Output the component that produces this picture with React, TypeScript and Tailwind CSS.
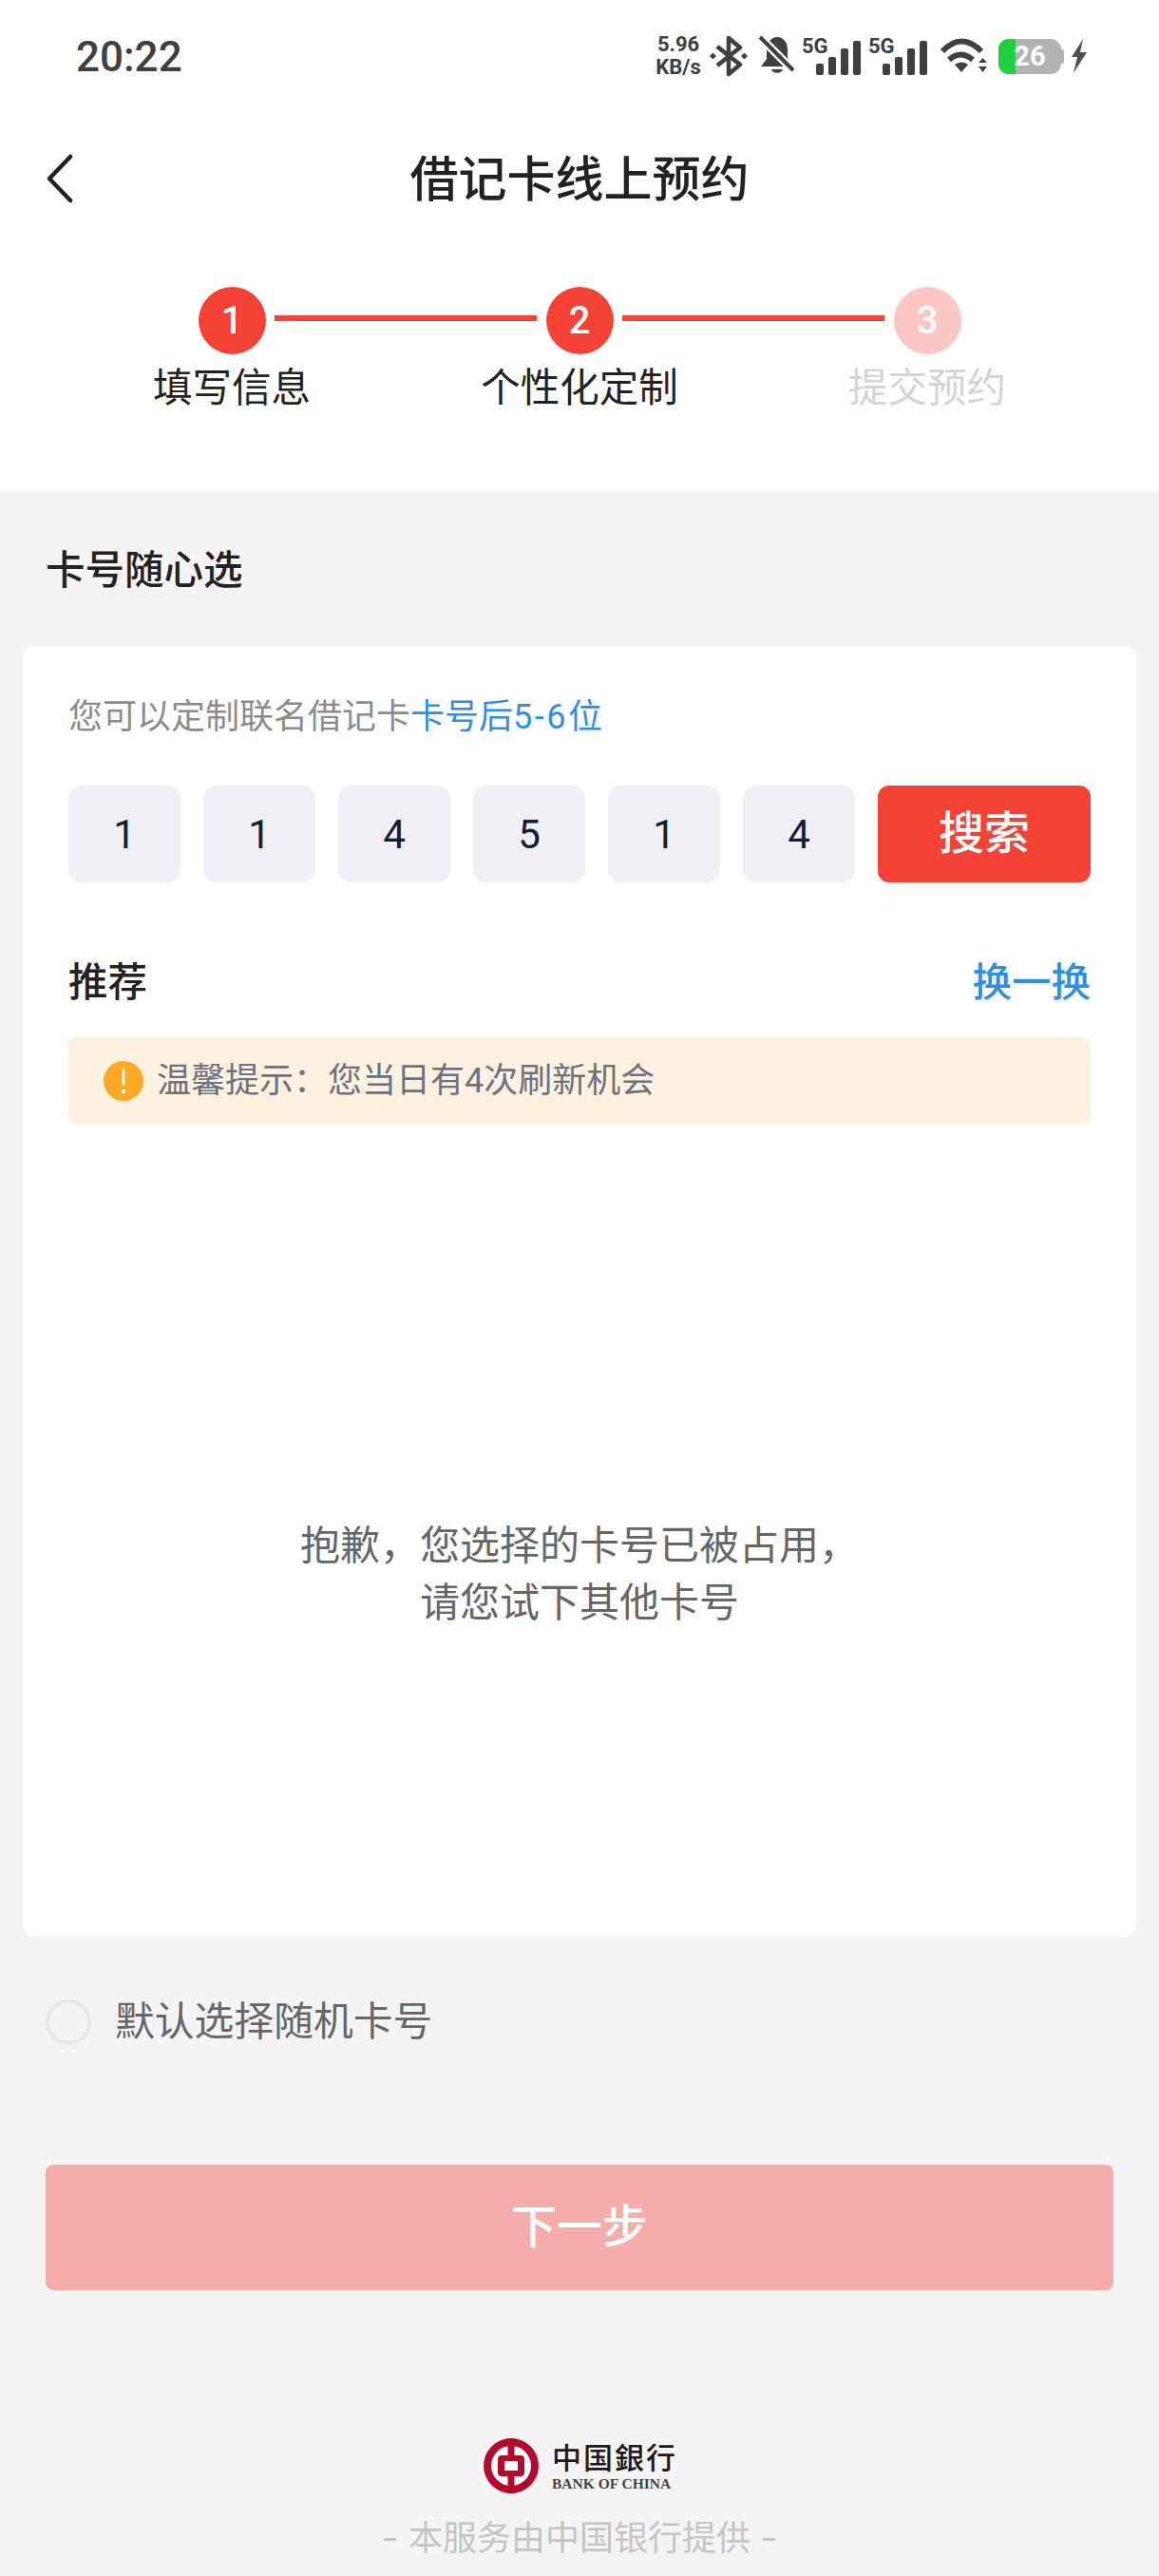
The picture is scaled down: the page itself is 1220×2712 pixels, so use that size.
const CJK = "font-['Roboto','Noto_Sans_CJK_SC',sans-serif]";

function Signal() {
  return (
    <div className="relative w-[62px] h-[40px]">
      <span className="absolute left-0 top-[-2px] text-[22px] leading-[24px] font-bold text-[#404040] font-['Roboto',sans-serif]">5G</span>
      <svg width="62" height="40" viewBox="0 0 62 40" className="absolute inset-0" fill="#404040">
        <rect x="15" y="28" width="8" height="12" rx="2" />
        <rect x="28" y="21" width="8" height="19" rx="2" />
        <rect x="41" y="12" width="8" height="28" rx="2" />
        <rect x="54" y="4" width="8" height="36" rx="2" />
      </svg>
    </div>
  );
}

function StatusBar() {
  return (
    <div className="h-[110px] flex items-start justify-between pt-[37px] pl-[80px] pr-[76px]">
      <div className="text-[44px] leading-[46px] font-medium text-[#404040] font-['Roboto',sans-serif]">20:22</div>
      <div className="flex items-center h-[44px] text-[#404040]">
        <div className="w-[48px] text-center font-bold text-[22px] leading-[24px] font-['Roboto',sans-serif]">
          5.96
          <br />
          KB/s
        </div>
        <svg width="40" height="44" viewBox="0 0 40 44" className="ml-[9px]" fill="none" stroke="#404040" strokeWidth="4.5" strokeLinejoin="round">
          <path d="M8 12 L32 31 L20 41 V3 L32 13 L8 32" />
          <path d="M0.5 22 L3.5 19 L6.5 22 L3.5 25 Z M33.5 22 L36.5 19 L39.5 22 L36.5 25 Z" fill="#404040" strokeWidth="1" />
        </svg>
        <svg width="40" height="44" viewBox="0 0 40 44" className="ml-[11px]" fill="#404040">
          <path d="M20 2 C27 2 31 8 31 15 V24 L37 33 H3 L9 25 V14 C9 8 14 2 20 2 Z" />
          <path d="M14 36 H26 C25 41 15 41 14 36 Z" />
          <path d="M2 2 L37 37" stroke="#ffffff" strokeWidth="9" />
          <path d="M2 2 L37 37" stroke="#404040" strokeWidth="4" />
        </svg>
        <div className="ml-[6px]"><Signal /></div>
        <div className="ml-[8px]"><Signal /></div>
        <svg width="50" height="38" viewBox="0 0 50 38" className="ml-[13px]" fill="#404040">
          <path d="M3 14 Q23 -7 44 14" fill="none" stroke="#404040" strokeWidth="6" />
          <path d="M10 23 Q22 12 35 23" fill="none" stroke="#404040" strokeWidth="6" />
          <path d="M16 28 Q23 23 30 28 L23 36 Z" />
          <path d="M41 26 L45.5 21 L50 26 Z M41 30 L50 30 L45.5 36 Z" />
        </svg>
        <div className="relative ml-[12px] w-[69px] h-[37px]">
          <div className="absolute left-0 top-0 w-[66px] h-[37px] rounded-[11px] bg-[#b3b3b3] overflow-hidden">
            <div className="w-[18px] h-full bg-[#1fcf3f]" />
          </div>
          <div className="absolute right-0 top-[11px] w-[3px] h-[15px] rounded-r-[2px] bg-[#b3b3b3]" />
          <div className="absolute left-[15px] top-0 w-[36px] text-center text-white font-bold text-[29px] leading-[37px] font-['Roboto',sans-serif]">26</div>
        </div>
        <svg width="17" height="36" viewBox="0 0 17 36" className="ml-[7px]" fill="#505050">
          <path d="M13 0 L1 19 H7 L3 36 L17 14 H10 L13 0 Z" />
        </svg>
      </div>
    </div>
  );
}

function Circle({ n, light }: { n: number; light?: boolean }) {
  return (
    <div className={`w-[71px] h-[71px] rounded-full flex items-center justify-center text-white text-[40px] font-medium font-['Roboto',sans-serif] ${light ? "bg-[#fcc7c3]" : "bg-[#f44336]"}`}>
      {n}
    </div>
  );
}

function Logo() {
  return (
    <div className="flex justify-center items-start h-[58px]">
      <svg width="58" height="58" viewBox="0 0 58 58">
        <circle cx="29" cy="29" r="29" fill="#b5092e" />
        <circle cx="29" cy="29" r="21" fill="#ffffff" />
        <rect x="25.5" y="0" width="7" height="58" fill="#b5092e" />
        <rect x="15" y="18" width="28" height="22" rx="4" fill="#b5092e" />
        <rect x="22" y="24" width="14" height="10" fill="#ffffff" />
      </svg>
      <div className="ml-[14px] w-[130px] text-[#231815]">
        <div className="text-[31px] leading-[38px] font-medium tracking-[2px] whitespace-nowrap font-['Noto_Sans_CJK_TC',sans-serif]">中国銀行</div>
        <div className="text-[15.5px] leading-[16px] mt-[2px] whitespace-nowrap font-bold text-[#444] font-['Liberation_Serif',serif]">BANK OF CHINA</div>
      </div>
    </div>
  );
}

export default function App() {
  const digits = ["1", "1", "4", "5", "1", "4"];
  return (
    <div className={`w-[1220px] min-h-[2712px] bg-[#f4f4f4] ${CJK}`}>
      <div className="bg-white h-[517px]">
        <StatusBar />
        <div className="relative h-[160px] flex items-center justify-center">
          <svg width="30" height="52" viewBox="0 0 30 52" className="absolute left-[48px] top-[52px]" fill="none" stroke="#222" strokeWidth="4.5" strokeLinecap="round" strokeLinejoin="round">
            <path d="M26 3 L4 26 L26 49" />
          </svg>
          <div className="text-[51px] leading-[60px] font-medium text-[#222]">借记卡线上预约</div>
        </div>
        <div className="pt-[32px]">
          <div className="flex justify-center gap-[9.5px]">
            <Circle n={1} />
            <div className="w-[276px] h-[6px] mt-[30px] bg-[#f44336]" />
            <Circle n={2} />
            <div className="w-[276px] h-[6px] mt-[30px] bg-[#f44336]" />
            <Circle n={3} light />
          </div>
          <div className="grid grid-cols-3 px-[61px] mt-[8px] text-center text-[41.5px] leading-[56px]">
            <div className="text-[#222]">填写信息</div>
            <div className="text-[#222]">个性化定制</div>
            <div className="text-[#d4d4d4]">提交预约</div>
          </div>
        </div>
      </div>

      <div className="pt-[54px] pl-[48px] text-[41.5px] leading-[60px] font-medium text-[#222]">卡号随心选</div>

      <div className="mx-[24px] mt-[49px] h-[1359px] bg-white rounded-[12px] px-[48px] pt-[45px]">
        <div className="text-[36px] leading-[60px] text-[#8c8c8c]">
          您可以定制联名借记卡<span className="text-[#2f8fe6]">卡号后<span className="tracking-[2.5px]">5-6</span>位</span>
        </div>
        <div className="mt-[42px] flex gap-[24px]">
          {digits.map((d, i) => (
            <div key={i} className="w-[118px] h-[102px] rounded-[14px] bg-[#efeff5] flex items-center justify-center text-[42px] font-normal text-[#141c38]">
              {d}
            </div>
          ))}
          <div className="w-[224px] h-[102px] rounded-[12px] bg-[#f44336] flex items-center justify-center text-white text-[48px] font-medium">搜索</div>
        </div>
        <div className="mt-[76px] flex items-center justify-between h-[60px] text-[41.5px] font-medium">
          <div className="text-[#222]">推荐</div>
          <div className="text-[#2f8fe6]">换一换</div>
        </div>
        <div className="mt-[27px] h-[92px] rounded-[10px] bg-[#fef1df] flex items-center pl-[37px]">
          <svg width="42" height="42" viewBox="0 0 42 42">
            <circle cx="21" cy="21" r="21" fill="#fba926" />
            <rect x="19.7" y="8" width="2.6" height="18" rx="1.3" fill="#ffffff" />
            <circle cx="21" cy="32" r="2.2" fill="#ffffff" />
          </svg>
          <div className="ml-[14px] text-[36px] text-[#6b7280]">温馨提示：您当日有4次刷新机会</div>
        </div>
        <div className="mt-[414px] text-center text-[42px] leading-[60px] text-[#666]">
          抱歉，您选择的卡号已被占用，
          <br />
          请您试下其他卡号
        </div>
      </div>

      <div className="mt-[66px] ml-[48px] flex items-center">
        <div className="w-[48px] h-[48px] rounded-full border-[4px] border-[#e5e7eb]" />
        <div className="ml-[25px] text-[41.8px] leading-[48px] text-[#666]">默认选择随机卡号</div>
      </div>

      <div className="mt-[126px] mx-[48px] h-[132px] rounded-[8px] bg-[#f4adab] flex items-center justify-center text-white text-[48px] font-medium">下一步</div>

      <div className="mt-[156px]"><Logo /></div>
      <div className="mt-[23px] flex justify-center items-center gap-[13px] text-[36px] leading-[50px] text-[#c4c4c4]">
        <span className="w-[13px] h-[3px] bg-[#c4c4c4]" />
        <span>本服务由中国银行提供</span>
        <span className="w-[13px] h-[3px] bg-[#c4c4c4]" />
      </div>
    </div>
  );
}
